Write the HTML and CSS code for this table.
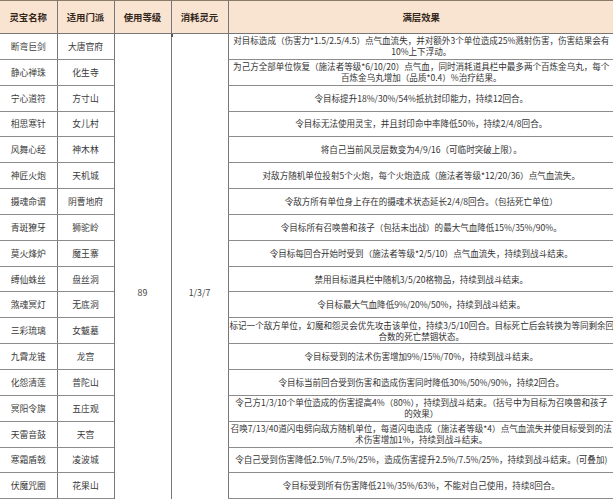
FILE: index.html
```html
<!DOCTYPE html>
<html lang="zh-CN">
<head>
<meta charset="utf-8">
<title>灵宝</title>
<link rel="stylesheet" href="styles.css">
</head>
<body>
<table class="lb">
  <colgroup>
    <col class="c-name"><col class="c-sect"><col class="c-lv"><col class="c-cost"><col class="c-eff">
  </colgroup>
  <thead>
    <tr class="head">
      <th>灵宝名称</th><th>适用门派</th><th>使用等级</th><th>消耗灵元</th><th>满层效果</th>
    </tr>
  </thead>
  <tbody>
    <tr class="r"><td>断弯巨剑</td><td>大唐官府</td><td class="merge" rowspan="18"><span class="tick"></span>89</td><td class="merge" rowspan="18">1/3/7</td><td class="eff">对目标造成（伤害力*1.5/2.5/4.5）点气血流失，并对额外3个单位造成25%溅射伤害，伤害结果会有<br>10%上下浮动。</td></tr>
    <tr class="r"><td>静心禅珠</td><td>化生寺</td><td class="eff">为己方全部单位恢复（施法者等级*6/10/20）点气血，同时消耗道具栏中最多两个百炼金乌丸，每个<br>百炼金乌丸增加（品质*0.4）%治疗结果。</td></tr>
    <tr class="r"><td>宁心道符</td><td>方寸山</td><td class="eff">令目标提升18%/30%/54%抵抗封印能力，持续12回合。</td></tr>
    <tr class="r"><td>相思寒针</td><td>女儿村</td><td class="eff">令目标无法使用灵宝，并且封印命中率降低50%，持续2/4/8回合。</td></tr>
    <tr class="r"><td>风舞心经</td><td>神木林</td><td class="eff">将自己当前风灵层数变为4/9/16（可临时突破上限）。</td></tr>
    <tr class="r"><td>神匠火炮</td><td>天机城</td><td class="eff">对敌方随机单位投射5个火炮，每个火炮造成（施法者等级*12/20/36）点气血流失。</td></tr>
    <tr class="r"><td>摄魂命谓</td><td>阴曹地府</td><td class="eff">令敌方所有单位身上存在的摄魂术状态延长2/4/8回合。（包括死亡单位）</td></tr>
    <tr class="r"><td>青斑獠牙</td><td>狮驼岭</td><td class="eff">令目标所有召唤兽和孩子（包括未出战）的最大气血降低15%/35%/90%。</td></tr>
    <tr class="r"><td>莫火烽炉</td><td>魔王寨</td><td class="eff">令目标每回合开始时受到（施法者等级*2/5/10）点气血流失，持续到战斗结束。</td></tr>
    <tr class="r"><td>缚仙蛛丝</td><td>盘丝洞</td><td class="eff">禁用目标道具栏中随机3/5/20格物品，持续到战斗结束。</td></tr>
    <tr class="r"><td>煞魂冥灯</td><td>无底洞</td><td class="eff">令目标最大气血降低9%/20%/50%，持续到战斗结束。</td></tr>
    <tr class="r"><td>三彩琉璃</td><td>女魃墓</td><td class="eff">标记一个敌方单位，幻魔和怨灵会优先攻击该单位，持续3/5/10回合。目标死亡后会转换为等同剩余回<br>合数的死亡禁锢状态。</td></tr>
    <tr class="r"><td>九霄龙锥</td><td>龙宫</td><td class="eff">令目标受到的法术伤害增加9%/15%/70%，持续到战斗结束。</td></tr>
    <tr class="r"><td>化怨清莲</td><td>普陀山</td><td class="eff">令目标当前回合受到伤害和造成伤害同时降低30%/50%/90%，持续2回合。</td></tr>
    <tr class="r"><td>冥阳令旗</td><td>五庄观</td><td class="eff">令己方1/3/10个单位造成的伤害提高4%（80%），持续到战斗结束。（括号中为目标为召唤兽和孩子<br>的效果）</td></tr>
    <tr class="r"><td>天雷音鼓</td><td>天宫</td><td class="eff">召唤7/13/40道闪电劈向敌方随机单位，每道闪电造成（施法者等级*4）点气血流失并使目标受到的法<br>术伤害增加1%，持续到战斗结束。</td></tr>
    <tr class="r"><td>寒霜盾戟</td><td>凌波城</td><td class="eff">令自己受到伤害降低2.5%/7.5%/25%，造成伤害提升2.5%/7.5%/25%，持续到战斗结束。(可叠加)</td></tr>
    <tr class="r"><td>伏魔咒圈</td><td>花果山</td><td class="eff">令目标受到所有伤害降低21%/35%/63%，不能对自己使用，持续8回合。</td></tr>
  </tbody>
</table>
</body>
</html>
```
FILE: styles.css
```css
html, body {
  margin: 0;
  padding: 0;
  background: #ffffff;
  overflow: hidden;
}
body {
  width: 613px;
  height: 500px;
  font-family: "Noto Sans CJK SC", "Noto Sans", sans-serif;
  color: #333333;
}
.lb {
  border-collapse: collapse;
  table-layout: fixed;
  width: 614px;
  border-top: 1px solid #8a7a6a;
}
.c-name { width: 57px; }
.c-sect { width: 57px; }
.c-lv { width: 57px; }
.c-cost { width: 57px; }
.c-eff { width: 386px; }

.head {
  height: 33px;
  background: #f9e4d1;
}
.head th {
  font-size: 9.4px;
  font-weight: bold;
  color: #33261b;
  line-height: 12px;
  padding: 0;
  text-align: center;
  vertical-align: middle;
  border-left: 1px solid #777777;
  border-bottom: 1px solid #777777;
}
.head th:first-child { border-left: none; }

.r { height: 25.85px; }
.r td {
  font-size: 8.8px;
  line-height: 11px;
  padding: 0 1px;
  text-align: center;
  vertical-align: middle;
  border-left: 1px solid #777777;
  border-bottom: 1px solid #8c8c8c;
  color: #3a3a3a;
  white-space: nowrap;
}
.r td:first-child { border-left: none; }
.r td.eff {
  font-size: 8.55px;
  color: #333333;
}
.r td.merge {
  position: relative;
  vertical-align: top;
  padding-top: 253px;
  border-bottom: none;
  font-size: 8.8px;
  color: #444444;
}
.tick {
  position: absolute;
  right: -2px;
  top: 0;
  width: 2px;
  height: 3px;
  background: #555555;
}
```
